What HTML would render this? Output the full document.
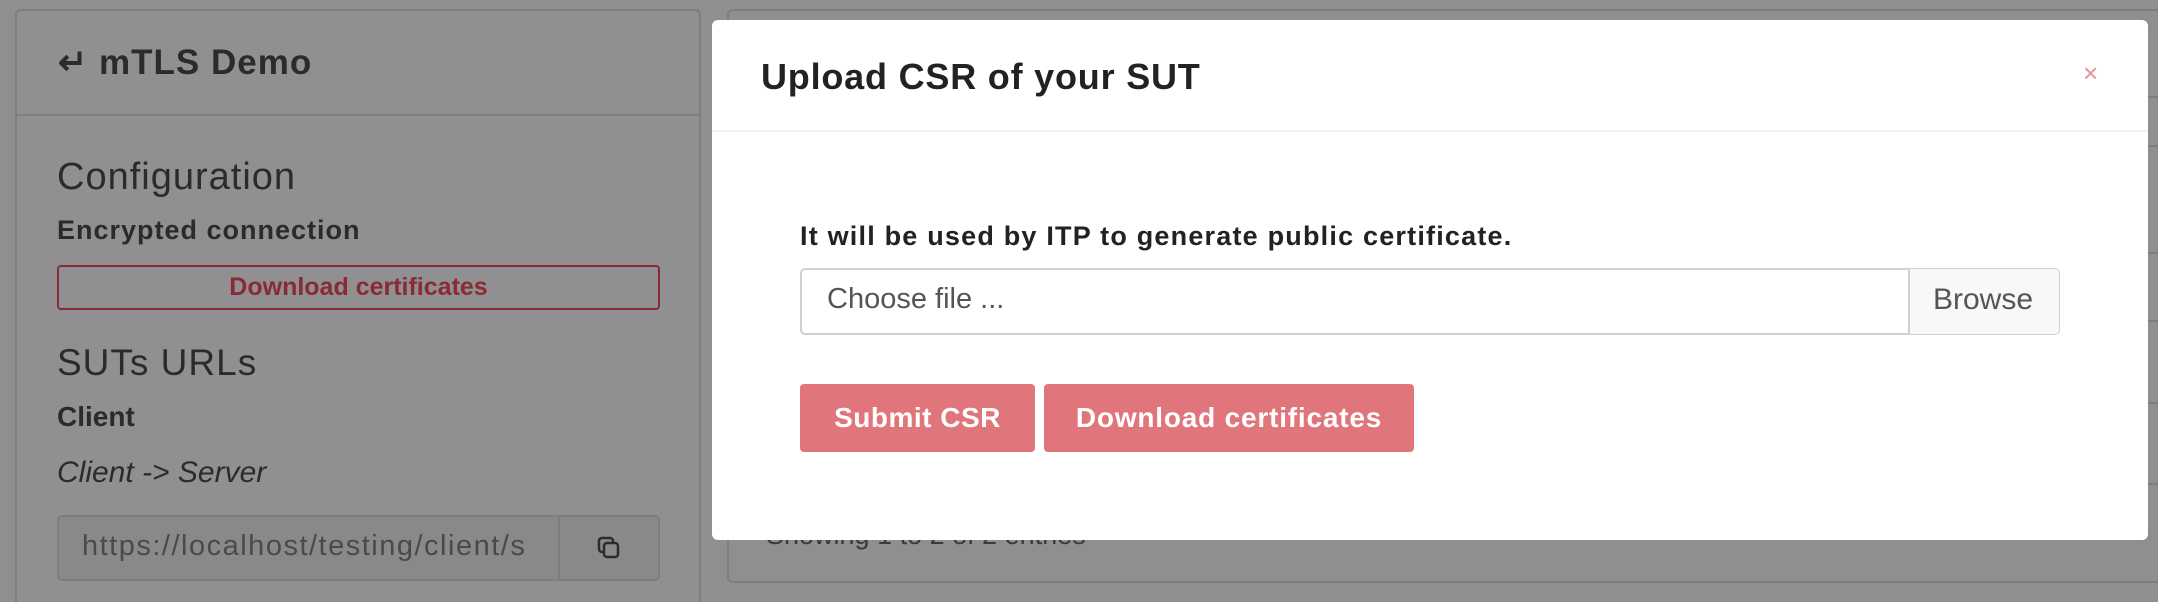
<!DOCTYPE html>
<html><head><meta charset="utf-8"><style>
*{box-sizing:border-box;margin:0;padding:0}
html,body{width:2158px;height:602px;overflow:hidden}
body{background:#8f8f91;font-family:"Liberation Sans",sans-serif;position:relative;color:#2b2b2d}
.a{position:absolute}
.card{left:15px;top:9px;width:686px;height:620px;border:2px solid #7e7e80;border-radius:6px;background:#909092}
.t{white-space:nowrap}
</style></head><body>
<div class="a card"></div>
<div class="a" style="left:16px;top:114px;width:684px;height:2px;background:#7e7e80"></div>
<div class="a t" style="left:58px;top:43px;font-size:35px;font-weight:bold;letter-spacing:1px;color:#2b2b2d">↵ mTLS Demo</div>
<div class="a t" style="left:57px;top:156px;font-size:38px;letter-spacing:1px;color:#2b2b2d">Configuration</div>
<div class="a t" style="left:57px;top:215px;font-size:27px;font-weight:bold;letter-spacing:1px">Encrypted connection</div>
<div class="a" style="left:57px;top:265px;width:603px;height:45px;border:2px solid #8a2a33;border-radius:4px;text-align:center;line-height:41px;font-size:25px;font-weight:bold;color:#8a2a33">Download certificates</div>
<div class="a t" style="left:57px;top:342px;font-size:37px;letter-spacing:1px">SUTs URLs</div>
<div class="a t" style="left:57px;top:401px;font-size:28px;font-weight:bold">Client</div>
<div class="a t" style="left:57px;top:456px;font-size:30px;font-style:italic">Client -&gt; Server</div>
<div class="a" style="left:57px;top:515px;width:603px;height:66px;border:2px solid #7e7e80;border-radius:5px;background:#89898b"></div>
<div class="a" style="left:558px;top:516px;width:2px;height:64px;background:#7e7e80"></div>
<div class="a t" style="left:82px;top:530px;font-size:29px;letter-spacing:1.5px;color:#4a4a4c">https://localhost/testing/client/s</div>
<svg class="a" style="left:596px;top:535px" width="26" height="26" viewBox="0 0 26 26"><rect x="3" y="3" width="14" height="14" rx="3" fill="none" stroke="#2b2b2d" stroke-width="2.5"/><rect x="8" y="8" width="14" height="14" rx="3" fill="#89898b" stroke="#2b2b2d" stroke-width="2.5"/></svg>
<div class="a" style="left:727px;top:9px;width:1440px;height:574px;border:2px solid #7e7e80;border-radius:6px"></div>
<div class="a" style="left:2148px;top:96px;width:10px;height:2px;background:#7e7e80"></div>
<div class="a" style="left:2148px;top:145px;width:10px;height:2px;background:#7e7e80"></div>
<div class="a" style="left:2148px;top:252px;width:10px;height:2px;background:#7e7e80"></div>
<div class="a" style="left:2148px;top:320px;width:10px;height:2px;background:#7e7e80"></div>
<div class="a" style="left:2148px;top:402px;width:10px;height:2px;background:#7e7e80"></div>
<div class="a" style="left:2148px;top:483px;width:10px;height:2px;background:#7e7e80"></div>
<div class="a t" style="left:766px;top:520px;font-size:27px;color:#3a3a3c">Showing 1 to 2 of 2 entries</div>
<div class="a" style="left:712px;top:20px;width:1436px;height:520px;background:#fff;border-radius:6px"></div>
<div class="a" style="left:712px;top:130px;width:1436px;height:2px;background:#efefef"></div>
<div class="a t" style="left:761px;top:56px;font-size:36px;font-weight:bold;letter-spacing:0.8px;color:#222">Upload CSR of your SUT</div>
<div class="a t" style="left:2083px;top:58px;font-size:26px;color:#e59097">×</div>
<div class="a t" style="left:800px;top:221px;font-size:27px;font-weight:bold;letter-spacing:1.2px;color:#222">It will be used by ITP to generate public certificate.</div>
<div class="a" style="left:800px;top:268px;width:1260px;height:67px;border:2px solid #d0d0d0;border-radius:5px;background:#fff"></div>
<div class="a" style="left:1908px;top:269px;width:151px;height:65px;background:#f8f8f8;border-left:2px solid #d0d0d0;border-radius:0 4px 4px 0"></div>
<div class="a t" style="left:827px;top:283px;font-size:29px;color:#555">Choose file ...</div>
<div class="a t" style="left:1933px;top:283px;font-size:30px;color:#555">Browse</div>
<div class="a" style="left:800px;top:384px;width:235px;height:68px;background:#e0757b;border-radius:4px;color:#fff;font-size:28px;font-weight:bold;letter-spacing:0.5px;text-align:center;line-height:68px">Submit CSR</div>
<div class="a" style="left:1044px;top:384px;width:370px;height:68px;background:#e0757b;border-radius:4px;color:#fff;font-size:28px;font-weight:bold;letter-spacing:0.8px;text-align:center;line-height:68px">Download certificates</div>
</body></html>
